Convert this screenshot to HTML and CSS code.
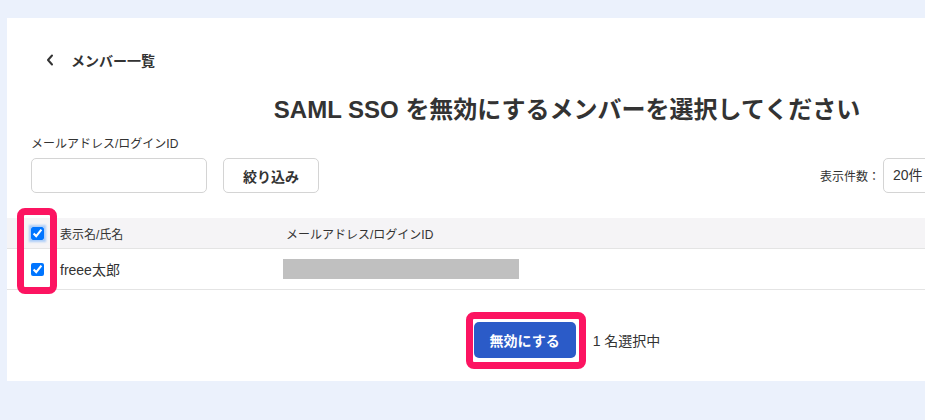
FILE: index.html
```html
<!DOCTYPE html>
<html lang="ja">
<head>
    <meta charset="UTF-8">
    <meta name="viewport" content="width=device-width, initial-scale=1.0">
    <title>SAML SSO メンバー選択</title>
    <link rel="stylesheet" href="styles.css">
</head>
<body>

<div class="card">
    <!-- Back link -->
    <a href="#" class="back-link">
        <svg class="back-icon" width="8" height="12" viewBox="0 0 8 12">
            <path d="M6 1.5 L2 6 L6 10.5" fill="none" stroke="#333" stroke-width="2" stroke-linecap="round" stroke-linejoin="round"/>
        </svg>
        <span>メンバー一覧</span>
    </a>

    <h1 class="page-title">SAML SSO を無効にするメンバーを選択してください</h1>

    <!-- Filter -->
    <div class="filter">
        <label class="filter-label" for="email">メールアドレス/ログインID</label>
        <div class="filter-row">
            <input id="email" class="text-input" type="text">
            <button class="btn">絞り込み</button>
            <div class="per-page">
                <span>表示件数：</span>
                <div class="select">20件</div>
            </div>
        </div>
    </div>

    <!-- Member table -->
    <div class="table">
        <div class="row head">
            <div class="cell check"><input type="checkbox" class="focused" checked></div>
            <div class="cell">表示名/氏名</div>
            <div class="cell email-head">メールアドレス/ログインID</div>
        </div>
        <div class="row">
            <div class="cell check"><input type="checkbox" checked></div>
            <div class="cell name">freee太郎</div>
            <div class="cell"><div class="masked"></div></div>
        </div>
        <div class="highlight check-highlight"></div>
    </div>

    <!-- Action -->
    <div class="actions">
        <span class="btn-wrap">
            <button class="btn-primary">無効にする</button>
            <span class="highlight btn-highlight"></span>
        </span>
        <span class="selected-count">1 名選択中</span>
    </div>
</div>

</body>
</html>
```

FILE: styles.css
```css
html {
    overflow: hidden;
}
body {
    font-family: "Liberation Sans", "Noto Sans CJK JP", sans-serif;
    background-color: #ebf1fc;
    color: #333;
    margin: 0;
    padding: 0;
}
.card {
    position: relative;
    width: 1120px;
    margin: 18px 0 0 7px;
    padding: 32px 0 23px;
    background-color: #fff;
}

/* Back link */
.back-link {
    display: flex;
    align-items: center;
    height: 20px;
    padding-left: 39px;
    color: #333;
    text-decoration: none;
    font-size: 14px;
    font-weight: bold;
}
.back-icon {
    margin-right: 17px;
}

.page-title {
    margin: 24px 0 0;
    text-align: center;
    font-size: 24px;
    line-height: 32px;
    color: #333;
}

/* Filter */
.filter {
    padding: 0 24px;
    margin-top: 9px;
}
.filter-label {
    display: block;
    font-size: 12px;
    line-height: 18px;
    margin-bottom: 5px;
}
.filter-row {
    display: flex;
    align-items: center;
}
.text-input {
    box-sizing: border-box;
    width: 176px;
    height: 35px;
    border: 1px solid #d4d4d4;
    border-radius: 5px;
    margin: 0;
}
.btn {
    box-sizing: border-box;
    height: 35px;
    width: 96px;
    margin-left: 16px;
    background-color: #fff;
    border: 1px solid #d4d4d4;
    border-radius: 5px;
    font-family: inherit;
    font-size: 14px;
    font-weight: bold;
    color: #333;
}
.per-page {
    display: flex;
    align-items: center;
    margin-left: auto;
    font-size: 12px;
}
.select {
    box-sizing: border-box;
    width: 220px;
    height: 35px;
    margin-left: 3px;
    padding: 0 9px;
    border: 1px solid #d4d4d4;
    border-radius: 5px;
    font-size: 14px;
    line-height: 33px;
}

/* Table */
.table {
    position: relative;
    margin-top: 25px;
}
.row {
    display: grid;
    grid-template-columns: 53px 223px 1fr;
    align-items: center;
    height: 40px;
    border-bottom: 1px solid #e4e4e4;
}
.row.head {
    height: 30px;
    background-color: #f5f4f6;
    font-size: 12px;
}
.cell.check {
    display: flex;
    padding-left: 24px;
}
.cell input {
    width: 13px;
    height: 13px;
    margin: 0;
}
.cell input.focused {
    box-shadow: 0 0 2px 2px rgba(0, 117, 255, 0.3);
    border-radius: 2px;
}
.email-head {
    padding-left: 3px;
}
.name {
    font-size: 14px;
}
.masked {
    width: 236px;
    height: 20px;
    background-color: #c0c0c0;
}

/* Action */
.actions {
    display: flex;
    align-items: center;
    justify-content: center;
    margin-top: 32px;
}
.btn-wrap {
    position: relative;
    display: flex;
}
.btn-primary {
    width: 102px;
    height: 36px;
    border: none;
    border-radius: 5px;
    background-color: #2b5bc8;
    color: #fff;
    font-family: inherit;
    font-size: 14px;
    font-weight: bold;
}
.selected-count {
    margin-left: 17px;
    font-size: 14px;
}

/* Pink annotation boxes */
.highlight {
    position: absolute;
    border: 7px solid #fc1461;
    border-radius: 8px;
    box-sizing: border-box;
}
.check-highlight {
    left: 10px;
    top: -10px;
    width: 40px;
    height: 86px;
}
.btn-highlight {
    left: -8px;
    top: -10px;
    width: 120px;
    height: 57px;
}
```
